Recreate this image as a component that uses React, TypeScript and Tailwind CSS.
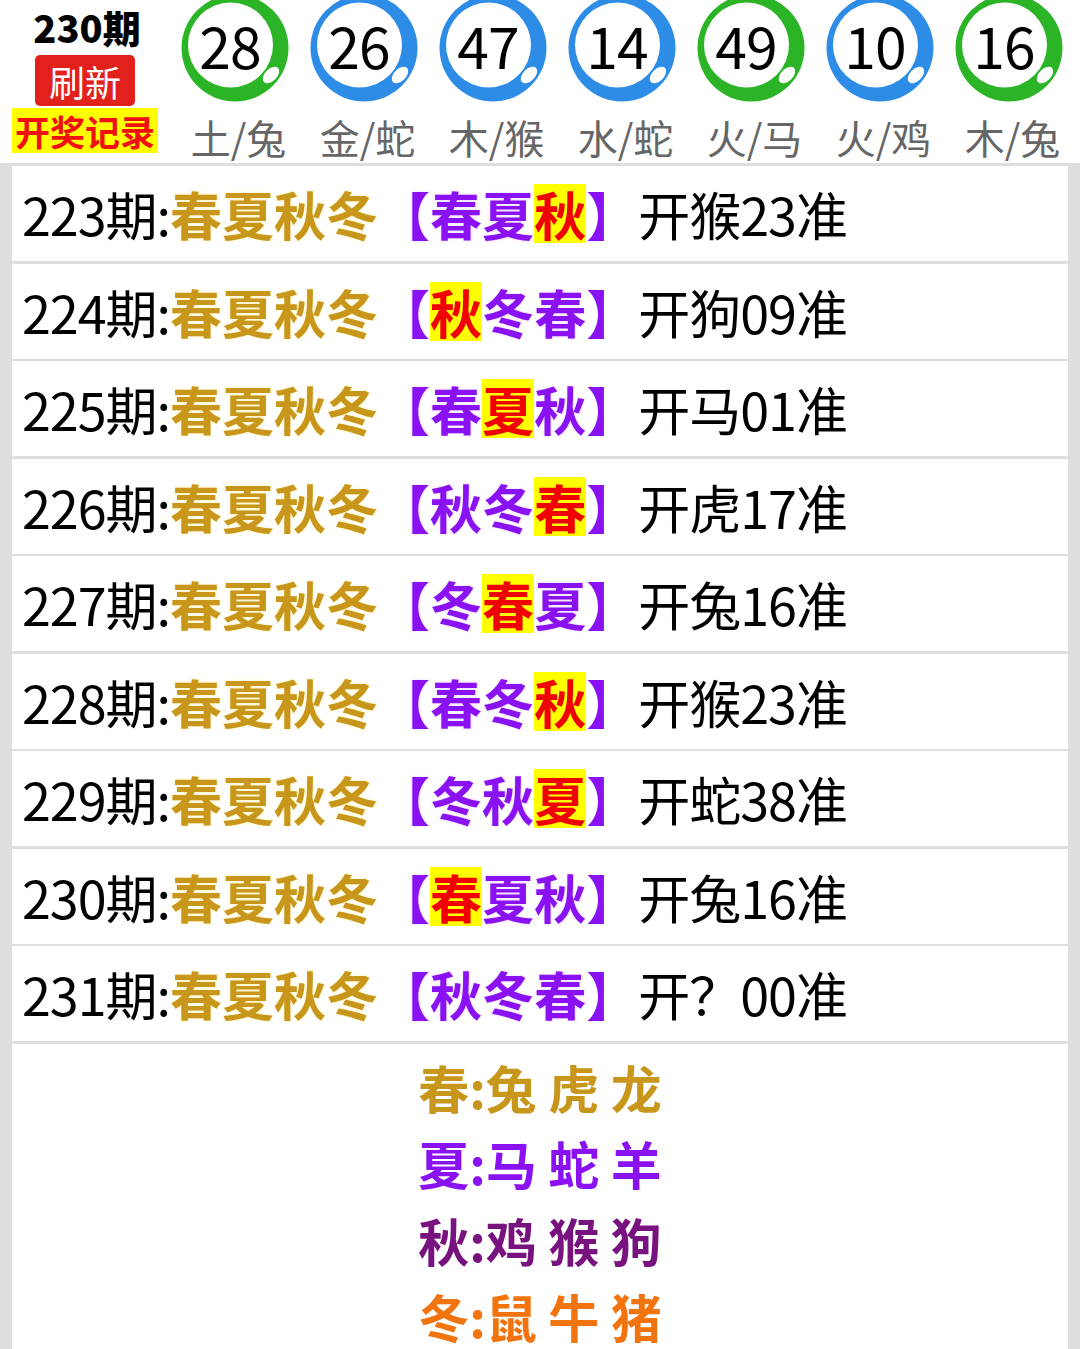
import React from 'react';

type Ball = { num: string; color: 'green' | 'blue'; label: string };

const balls: Ball[] = [
  { num: '28', color: 'green', label: '土/兔' },
  { num: '26', color: 'blue', label: '金/蛇' },
  { num: '47', color: 'blue', label: '木/猴' },
  { num: '14', color: 'blue', label: '水/蛇' },
  { num: '49', color: 'green', label: '火/马' },
  { num: '10', color: 'blue', label: '火/鸡' },
  { num: '16', color: 'green', label: '木/兔' },
];

// hl = index of the highlighted season inside the brackets
const rows = [
  { issue: '223', pick: ['春', '夏', '秋'], hl: 2, result: '开猴23准' },
  { issue: '224', pick: ['秋', '冬', '春'], hl: 0, result: '开狗09准' },
  { issue: '225', pick: ['春', '夏', '秋'], hl: 1, result: '开马01准' },
  { issue: '226', pick: ['秋', '冬', '春'], hl: 2, result: '开虎17准' },
  { issue: '227', pick: ['冬', '春', '夏'], hl: 1, result: '开兔16准' },
  { issue: '228', pick: ['春', '冬', '秋'], hl: 2, result: '开猴23准' },
  { issue: '229', pick: ['冬', '秋', '夏'], hl: 2, result: '开蛇38准' },
  { issue: '230', pick: ['春', '夏', '秋'], hl: 0, result: '开兔16准' },
  { issue: '231', pick: ['秋', '冬', '春'], hl: -1, result: '开？00准' },
];

const legend = [
  { text: '春:兔 虎 龙', cls: 'text-[#c8961a] leading-[76.5px]' },
  { text: '夏:马 蛇 羊', cls: 'text-[#8a12f2] leading-[76.5px]' },
  { text: '秋:鸡 猴 狗', cls: 'text-[#78127f] leading-[76.5px]' },
  { text: '冬:鼠 牛 猪', cls: 'text-[#f2740f] leading-[54px] mt-[11px]' },
];

function LottoBall({ ball }: { ball: Ball }) {
  const fill = ball.color === 'green' ? '#2bb526' : '#2d8ce6';
  return (
    <div className="relative w-[108px] h-[108px] -mt-[6px]">
      <svg width="108" height="108" viewBox="0 0 108 108" className="absolute inset-0">
        <circle cx="54" cy="54" r="53.5" fill={fill} />
        <circle cx="49.5" cy="51" r="42.5" fill="#ffffff" />
        <ellipse cx="90" cy="81" rx="10" ry="6" fill="#ffffff" transform="rotate(-45 90 81)" />
      </svg>
      <div className="absolute left-[7px] top-[8px] w-[85px] h-[85px] flex items-center justify-center text-[57px] leading-none text-black tracking-[-1px]">
        {ball.num}
      </div>
    </div>
  );
}

export default function App() {
  return (
    <div
      className="w-[1080px] h-[1349px] overflow-hidden bg-white flex flex-col"
      style={{ fontFamily: '"Noto Sans CJK SC", "Noto Sans", sans-serif' }}
    >
      {/* Header */}
      <header className="h-[163px] shrink-0 flex bg-white">
        <div className="w-[170px] flex flex-col items-center pt-[4px]">
          <div className="ml-[4px] text-[38px] leading-[46px] font-black text-black">230期</div>
          <div className="mt-[5px] w-[100px] h-[51px] rounded-[5px] bg-[#e2211c] flex items-center justify-center text-[36px] leading-none text-white">
            刷新
          </div>
          <div className="mt-[2px] bg-[#ffff00] px-[3px] text-[35px] leading-[45px] font-bold text-[#f01010]">
            开奖记录
          </div>
        </div>
        <div className="flex">
          {balls.map((b, i) => (
            <div key={i} className="w-[129px] flex flex-col items-center">
              <LottoBall ball={b} />
              <div className="mt-[12px] ml-[8px] text-[40px] leading-[46px] text-[#666666]">{b.label}</div>
            </div>
          ))}
        </div>
      </header>

      {/* Record table */}
      <div className="flex-1 flex flex-col bg-[#dedede] pt-[3px] px-[12px]">
        <div className="flex flex-col gap-[2.5px]">
          {rows.map((r) => (
            <div key={r.issue} className="h-[95px] bg-white flex items-center pl-[10px] text-[52px] leading-[59px] whitespace-nowrap">
              <span className="text-black tracking-[-1px]">{r.issue}期:</span>
              <span className="font-bold text-[#c8961a] [text-shadow:0_0_3px_#fff3b0]">春夏秋冬</span>
              <span className="font-bold text-[#8a12f2] [text-shadow:0_0_3px_#e9d0ff]">【</span>
              {r.pick.map((c, j) =>
                j === r.hl ? (
                  <span key={j} className="font-bold text-[#f00000] bg-[#ffff00]">{c}</span>
                ) : (
                  <span key={j} className="font-bold text-[#8a12f2] [text-shadow:0_0_3px_#e9d0ff]">{c}</span>
                )
              )}
              <span className="font-bold text-[#8a12f2]">】</span>
              <span className="text-black tracking-[-1px]">{r.result}</span>
            </div>
          ))}
        </div>
        <div className="mt-[2.5px] bg-white flex-1 flex flex-col items-center pt-[5px]">
          {legend.map((l) => (
            <div key={l.text} className={`text-[51px] font-bold whitespace-pre ${l.cls}`}>
              {l.text}
            </div>
          ))}
        </div>
      </div>
    </div>
  );
}
